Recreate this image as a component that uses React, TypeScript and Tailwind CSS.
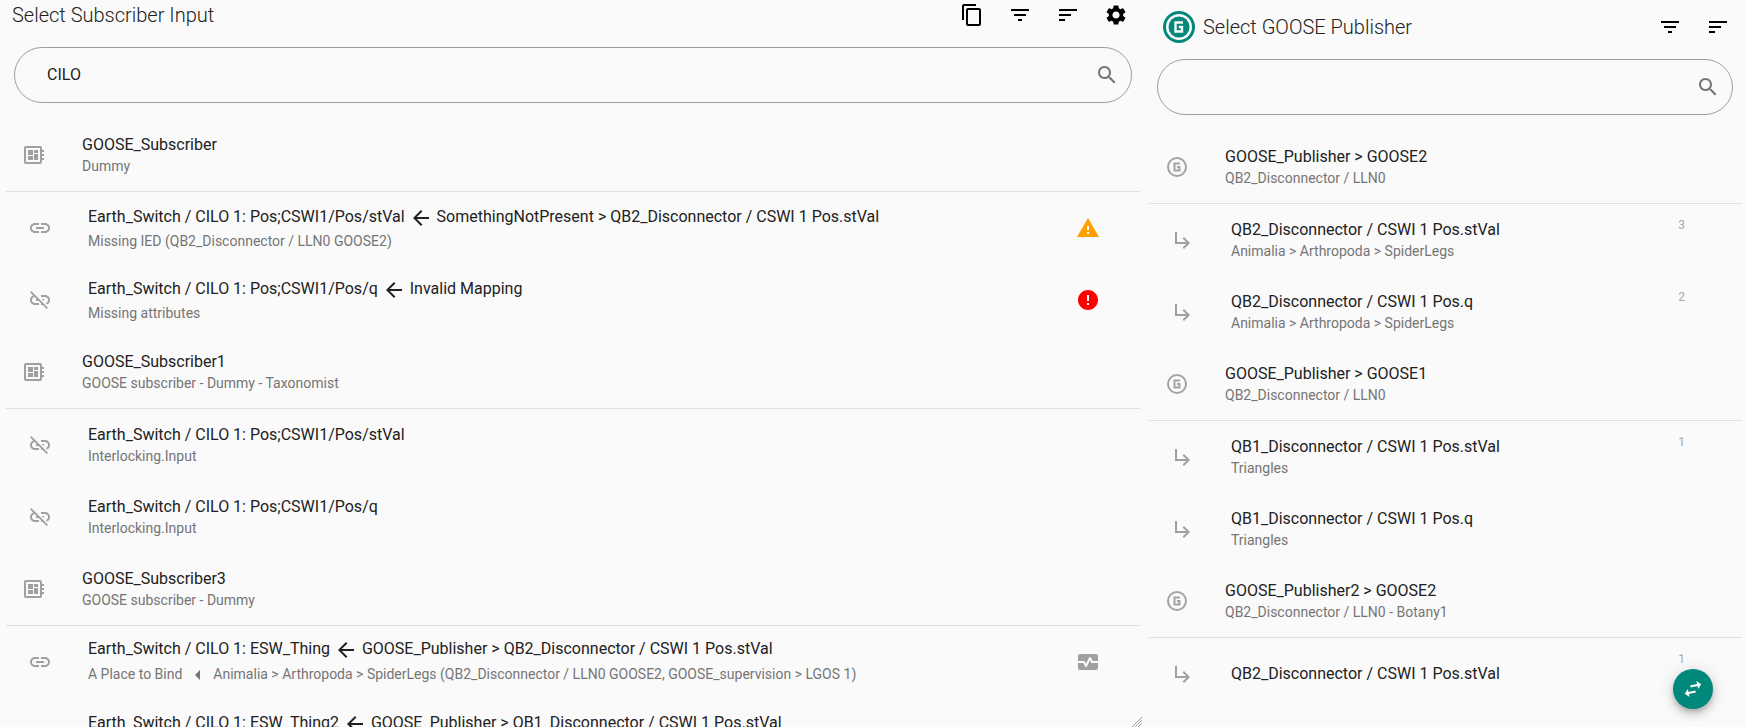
const ICONS: Record<string, string> = {
  copy: "M16 1H4c-1.1 0-2 .9-2 2v14h2V3h12V1zm3 4H8c-1.1 0-2 .9-2 2v14c0 1.1.9 2 2 2h11c1.1 0 2-.9 2-2V7c0-1.1-.9-2-2-2zm0 16H8V7h11v14z",
  filter: "M10 18h4v-2h-4v2zM3 6v2h18V6H3zm3 7h12v-2H6v2z",
  sort: "M3 18h6v-2H3v2zM3 6v2h18V6H3zm0 7h12v-2H3v2z",
  settings:
    "M19.14 12.94c.04-.3.06-.61.06-.94 0-.32-.02-.64-.07-.94l2.03-1.58c.18-.14.23-.41.12-.61l-1.92-3.32c-.12-.22-.37-.29-.59-.22l-2.39.96c-.5-.38-1.03-.7-1.62-.94l-.36-2.54c-.04-.24-.24-.41-.48-.41h-3.84c-.24 0-.43.17-.47.41l-.36 2.54c-.59.24-1.13.57-1.62.94l-2.39-.96c-.22-.08-.47 0-.59.22L2.74 8.87c-.12.21-.08.47.12.61l2.03 1.58c-.05.3-.09.63-.09.94s.02.64.07.94l-2.03 1.58c-.18.14-.23.41-.12.61l1.92 3.32c.12.22.37.29.59.22l2.39-.96c.5.38 1.03.7 1.62.94l.36 2.54c.05.24.24.41.48.41h3.84c.24 0 .44-.17.47-.41l.36-2.54c.59-.24 1.13-.56 1.62-.94l2.39.96c.22.08.47 0 .59-.22l1.92-3.32c.12-.22.07-.47-.12-.61l-2.01-1.58zM12 15.6c-1.98 0-3.6-1.62-3.6-3.6s1.62-3.6 3.6-3.6 3.6 1.62 3.6 3.6-1.62 3.6-3.6 3.6z",
  search:
    "M15.5 14h-.79l-.28-.27C15.41 12.59 16 11.11 16 9.5 16 5.91 13.09 3 9.5 3S3 5.91 3 9.5 5.91 16 9.5 16c1.61 0 3.09-.59 4.23-1.57l.27.28v.79l5 4.99L20.49 19l-4.99-5zm-6 0C7.01 14 5 11.99 5 9.5S7.01 5 9.5 5 14 7.01 14 9.5 11.99 14 9.5 14z",
  link: "M3.9 12c0-1.71 1.39-3.1 3.1-3.1h4V7H7c-2.76 0-5 2.24-5 5s2.24 5 5 5h4v-1.9H7c-1.71 0-3.1-1.39-3.1-3.1zM8 13h8v-2H8v2zm9-6h-4v1.9h4c1.71 0 3.1 1.39 3.1 3.1s-1.39 3.1-3.1 3.1h-4V17h4c2.76 0 5-2.24 5-5s-2.24-5-5-5z",
  linkOff:
    "M17 7h-4v1.9h4c1.71 0 3.1 1.39 3.1 3.1 0 1.43-.98 2.63-2.31 2.98l1.46 1.46C20.88 15.61 22 13.95 22 12c0-2.76-2.24-5-5-5zm-1 4h-2.19l2 2H16zM2 4.27l3.11 3.11C3.29 8.12 2 9.91 2 12c0 2.76 2.24 5 5 5h4v-1.9H7c-1.71 0-3.1-1.39-3.1-3.1 0-1.59 1.21-2.9 2.76-3.07L8.73 11H8v2h2.73L13 15.27V17h1.73l4.01 4L20 19.74 3.27 3 2 4.27z",
  warning: "M1 21h22L12 2 1 21zm12-3h-2v-2h2v2zm0-4h-2v-4h2v4z",
  error:
    "M12 2C6.48 2 2 6.48 2 12s4.48 10 10 10 10-4.48 10-10S17.52 2 12 2zm1 15h-2v-2h2v2zm0-4h-2V7h2v6z",
  arrowBack: "M20 11H7.83l5.59-5.59L12 4l-8 8 8 8 1.41-1.41L7.83 13H20v-2z",
  arrowLeft: "M14 7l-5 5 5 5V7z",
  subdirectory: "M19 15l-6 6-1.42-1.42L15.17 16H4V4h2v10h9.17l-3.59-3.58L13 9l6 6z",
  swap: "M6.99 11L3 15l3.99 4v-3H14v-2H6.99v-3zM21 9l-3.99-4v3H10v2h7.01v3L21 9z",
  monitor:
    "M15.11 12.45L14 10.24l-3.11 6.21c-.16.34-.51.55-.89.55s-.73-.21-.89-.55L7.38 13H2v5c0 1.1.9 2 2 2h16c1.1 0 2-.9 2-2v-5h-6c-.38 0-.73-.21-.89-.55zM20 4H4c-1.1 0-2 .9-2 2v5h6c.38 0 .73.21.89.55L10 13.76l3.11-6.21c.34-.68 1.45-.68 1.79 0L16.62 11H22V6c0-1.1-.9-2-2-2z",
  board:
    "M22 9V7h-2V5c0-1.1-.9-2-2-2H4c-1.1 0-2 .9-2 2v14c0 1.1.9 2 2 2h14c1.1 0 2-.9 2-2v-2h2v-2h-2v-2h2v-2h-2V9h2zm-4 10H4V5h14v14zM6 13h5v4H6zm6-6h4v3h-4zM6 7h5v5H6zm6 4h4v6h-4z",
};

function Icon({ name, className = "" }: { name: string; className?: string }) {
  return (
    <svg viewBox="0 0 24 24" className={`h-6 w-6 shrink-0 fill-current ${className}`}>
      <path d={ICONS[name]} />
    </svg>
  );
}

function GooseIcon() {
  return (
    <svg viewBox="0 0 24 24" className="h-6 w-6 shrink-0 fill-none stroke-[#a3a3a3]">
      <circle cx="12" cy="12" r="9" strokeWidth="2" />
      <path d="M15 8.5H9.5v7h5V12H12" strokeWidth="2" />
    </svg>
  );
}

function GooseBadge() {
  return (
    <svg viewBox="0 0 32 32" className="h-8 w-8 shrink-0">
      <circle cx="16" cy="16" r="16" fill="#00897b" />
      <circle cx="16" cy="16" r="13" fill="#fafafa" />
      <circle cx="16" cy="16" r="10.5" fill="#00897b" />
      <path d="M20 11.5h-7.5v9H19V16h-3.2" fill="none" stroke="#fafafa" strokeWidth="2.4" />
    </svg>
  );
}

function HeaderButton({ name }: { name: string }) {
  return (
    <button className="flex h-12 w-12 items-center justify-center text-black">
      <Icon name={name} />
    </button>
  );
}

function SearchBox({ value, className = "" }: { value?: string; className?: string }) {
  return (
    <div
      className={`flex h-14 items-center rounded-full border border-[#9e9e9e] pl-8 pr-3 ${className}`}
    >
      <span className="flex-1 text-base text-[#212121]">{value}</span>
      <Icon name="search" className="text-[#757575]" />
    </div>
  );
}

function Arrow() {
  return <Icon name="arrowBack" className="mx-0 inline-block align-middle text-[#212121]" />;
}

type Row = {
  kind: "group" | "item";
  icon: string;
  primary: string;
  mapped?: string;
  secondary?: string;
  via?: string;
  meta?: string;
  count?: string;
};

const SUBSCRIBER_ROWS: Row[] = [
  { kind: "group", icon: "board", primary: "GOOSE_Subscriber", secondary: "Dummy" },
  {
    kind: "item",
    icon: "link",
    primary: "Earth_Switch / CILO 1: Pos;CSWI1/Pos/stVal",
    mapped: "SomethingNotPresent > QB2_Disconnector / CSWI 1 Pos.stVal",
    secondary: "Missing IED (QB2_Disconnector / LLN0 GOOSE2)",
    meta: "warning",
  },
  {
    kind: "item",
    icon: "linkOff",
    primary: "Earth_Switch / CILO 1: Pos;CSWI1/Pos/q",
    mapped: "Invalid Mapping",
    secondary: "Missing attributes",
    meta: "error",
  },
  {
    kind: "group",
    icon: "board",
    primary: "GOOSE_Subscriber1",
    secondary: "GOOSE subscriber - Dummy - Taxonomist",
  },
  {
    kind: "item",
    icon: "linkOff",
    primary: "Earth_Switch / CILO 1: Pos;CSWI1/Pos/stVal",
    secondary: "Interlocking.Input",
  },
  {
    kind: "item",
    icon: "linkOff",
    primary: "Earth_Switch / CILO 1: Pos;CSWI1/Pos/q",
    secondary: "Interlocking.Input",
  },
  {
    kind: "group",
    icon: "board",
    primary: "GOOSE_Subscriber3",
    secondary: "GOOSE subscriber - Dummy",
  },
  {
    kind: "item",
    icon: "link",
    primary: "Earth_Switch / CILO 1: ESW_Thing",
    mapped: "GOOSE_Publisher > QB2_Disconnector / CSWI 1 Pos.stVal",
    secondary: "A Place to Bind",
    via: "Animalia > Arthropoda > SpiderLegs (QB2_Disconnector / LLN0 GOOSE2, GOOSE_supervision > LGOS 1)",
    meta: "monitor",
  },
  {
    kind: "item",
    icon: "link",
    primary: "Earth_Switch / CILO 1: ESW_Thing2",
    mapped: "GOOSE_Publisher > QB1_Disconnector / CSWI 1 Pos.stVal",
    secondary: "A Place to Bind",
  },
];

const PUBLISHER_ROWS: Row[] = [
  {
    kind: "group",
    icon: "goose",
    primary: "GOOSE_Publisher > GOOSE2",
    secondary: "QB2_Disconnector / LLN0",
  },
  {
    kind: "item",
    icon: "subdirectory",
    primary: "QB2_Disconnector / CSWI 1 Pos.stVal",
    secondary: "Animalia > Arthropoda > SpiderLegs",
    count: "3",
  },
  {
    kind: "item",
    icon: "subdirectory",
    primary: "QB2_Disconnector / CSWI 1 Pos.q",
    secondary: "Animalia > Arthropoda > SpiderLegs",
    count: "2",
  },
  {
    kind: "group",
    icon: "goose",
    primary: "GOOSE_Publisher > GOOSE1",
    secondary: "QB2_Disconnector / LLN0",
  },
  {
    kind: "item",
    icon: "subdirectory",
    primary: "QB1_Disconnector / CSWI 1 Pos.stVal",
    secondary: "Triangles",
    count: "1",
  },
  {
    kind: "item",
    icon: "subdirectory",
    primary: "QB1_Disconnector / CSWI 1 Pos.q",
    secondary: "Triangles",
  },
  {
    kind: "group",
    icon: "goose",
    primary: "GOOSE_Publisher2 > GOOSE2",
    secondary: "QB2_Disconnector / LLN0 - Botany1",
  },
  {
    kind: "item",
    icon: "subdirectory",
    primary: "QB2_Disconnector / CSWI 1 Pos.stVal",
    count: "1",
  },
];

const META_COLOR: Record<string, string> = {
  warning: "text-[#ffa000]",
  error: "text-[#ff0000]",
  monitor: "text-[#a0a0a0]",
};

function ListRow({ row }: { row: Row }) {
  const isGroup = row.kind === "group";

  return (
    <>
      <div className={`flex h-[72px] items-center ${isGroup ? "pl-4" : "pl-[22px]"}`}>
        {row.icon === "goose" ? (
          <GooseIcon />
        ) : (
          <Icon name={row.icon} className="text-[#a0a0a0]" />
        )}
        <div className={`min-w-0 flex-1 whitespace-nowrap ${isGroup ? "pl-9" : "pl-9"}`}>
          <div className="text-base leading-5 text-[#212121]">
            {row.primary}
            {row.mapped && (
              <>
                {" "}
                <Arrow /> {row.mapped}
              </>
            )}
          </div>
          {row.secondary && (
            <div className="mt-px text-sm leading-5 text-[#757575]">
              {row.secondary}
              {row.via && (
                <>
                  {" "}
                  <Icon name="arrowLeft" className="inline-block align-middle" /> {row.via}
                </>
              )}
            </div>
          )}
        </div>
        {row.meta && <Icon name={row.meta} className={`mr-10 ${META_COLOR[row.meta]}`} />}
        {row.count && (
          <span className="mr-[57px] mb-[30px] text-xs leading-[14px] text-[#a8a8a8]">
            {row.count}
          </span>
        )}
      </div>
      {isGroup && <div className="h-px bg-[#e0e0e0]" />}
    </>
  );
}

export default function App() {
  return (
    <div
      className="relative flex h-screen overflow-hidden bg-[#fafafa]"
      style={{ fontFamily: "Roboto, sans-serif" }}
    >
      <section className="w-[1145px] shrink-0 pl-[6px] pr-[5px]">
        <header className="flex h-[30px] items-center">
          <h2 className="flex-1 pl-[6px] text-xl font-light text-[#212121]">
            Select Subscriber Input
          </h2>
          <HeaderButton name="copy" />
          <HeaderButton name="filter" />
          <HeaderButton name="sort" />
          <HeaderButton name="settings" />
        </header>
        <SearchBox value="CILO" className="mx-2 mt-[17px]" />
        <div className="mt-4">
          {SUBSCRIBER_ROWS.map((row, index) => (
            <ListRow key={index} row={row} />
          ))}
        </div>
      </section>

      <section className="min-w-0 flex-1 pl-1 pr-[3px] pt-[3px]">
        <header className="flex h-12 items-center">
          <div className="flex flex-1 items-center gap-2 pl-[14px]">
            <GooseBadge />
            <h2 className="text-xl font-light text-[#212121]">Select GOOSE Publisher</h2>
          </div>
          <HeaderButton name="filter" />
          <HeaderButton name="sort" />
        </header>
        <SearchBox className="ml-2 mr-[9px] mt-2" />
        <div className="mt-4">
          {PUBLISHER_ROWS.map((row, index) => (
            <ListRow key={index} row={row} />
          ))}
        </div>
      </section>

      <svg viewBox="0 0 10 10" className="absolute left-[1132px] top-[717px] h-[10px] w-[10px] stroke-[#9e9e9e]">
        <path d="M0 10L10 0M3 10L10 3M6 10L10 6" strokeWidth="1" />
      </svg>

      <button className="absolute left-[1673px] top-[669px] flex h-10 w-10 items-center justify-center rounded-full bg-[#00897b] text-white shadow-[0_3px_5px_-1px_rgba(0,0,0,0.2),0_6px_10px_0_rgba(0,0,0,0.14),0_1px_18px_0_rgba(0,0,0,0.12)]">
        <Icon name="swap" className="-rotate-12" />
      </button>
    </div>
  );
}
